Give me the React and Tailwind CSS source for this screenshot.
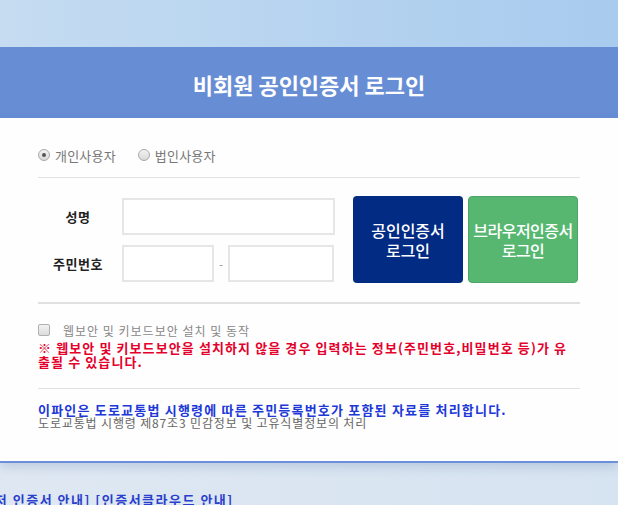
export default function App() {
  return (
    <div className="w-[618px] h-[505px] overflow-hidden flex flex-col font-['Noto_Sans_CJK_KR','Noto_Sans',sans-serif] bg-[#dae5f1]">
      <div className="h-[47px] shrink-0 bg-gradient-to-r from-[#c5dcf1] to-[#a8cbee]" />
      <div className="h-[71px] shrink-0 bg-[#678dd5] flex items-center justify-center">
        <span className="text-white font-bold text-[22px] leading-none tracking-[0px] mt-[2px]">비회원 공인인증서 로그인</span>
      </div>
      <div className="h-[345px] shrink-0 bg-[#fefefe] border-b-2 border-[#6b8fdb] shadow-[0_4px_10px_rgba(40,80,140,0.18)] px-[38px] pt-[31px] relative z-10">
        <div className="h-[12px] flex items-center text-[13px] text-[#777] leading-none tracking-[0.2px]">
          <span className="w-[12px] h-[12px] rounded-full border border-[#a9a9a9] bg-gradient-to-b from-[#f4f4f4] to-[#d8d8d8] flex items-center justify-center">
            <span className="w-[4px] h-[4px] rounded-full bg-[#555]" />
          </span>
          <span className="ml-[5px]">개인사용자</span>
          <span className="ml-[22px] w-[12px] h-[12px] rounded-full border border-[#a9a9a9] bg-gradient-to-b from-[#f4f4f4] to-[#d8d8d8]" />
          <span className="ml-[5px]">법인사용자</span>
        </div>
        <div className="mt-[16px] border-t border-[#e2e2e2]" />
        <div className="mt-[18px] flex">
          <div className="pt-[2px] flex flex-col gap-[10px]">
            <div className="flex items-center h-[37px]">
              <div className="w-[80px] text-center text-[13px] font-bold text-[#222] tracking-[0.5px]">성명</div>
              <div className="ml-[4px] w-[213px] h-[37px] border-2 border-[#e6e6e6] bg-white" />
            </div>
            <div className="flex items-center h-[37px]">
              <div className="w-[80px] text-center text-[13px] font-bold text-[#222] tracking-[0.5px]">주민번호</div>
              <div className="ml-[4px] w-[92px] h-[37px] border-2 border-[#e6e6e6] bg-white" />
              <div className="w-[14px] text-center text-[12px] text-[#999]">-</div>
              <div className="w-[106px] h-[37px] border-2 border-[#e6e6e6] bg-white" />
            </div>
          </div>
          <div className="ml-[18px] w-[110px] h-[87px] rounded-[4px] bg-[#022b84] flex items-center justify-center text-center text-white text-[16px] font-medium leading-[20px]">
            공인인증서<br />로그인
          </div>
          <div className="ml-[5px] w-[110px] h-[87px] rounded-[4px] bg-[#57b771] border border-[#4ea666] flex items-center justify-center text-center text-white text-[16px] font-medium leading-[20px] tracking-[-0.5px]">
            브라우저인증서<br />로그인
          </div>
        </div>
        <div className="mt-[19px] border-t-2 border-[#e0e0e0]" />
        <div className="mt-[20px] h-[12px] flex items-center">
          <span className="w-[12px] h-[12px] rounded-[2px] border border-[#b0b0b0] bg-gradient-to-b from-[#f2f2f2] to-[#dcdcdc]" />
          <span className="ml-[13px] text-[12px] text-[#888] leading-none mt-[1px] tracking-[1px]">웹보안 및 키보드보안 설치 및 동작</span>
        </div>
        <div className="mt-[5px] text-[13px] leading-[14px] font-bold text-[#e4002b] whitespace-nowrap tracking-[1.1px]">
          ※ 웹보안 및 키보드보안을 설치하지 않을 경우 입력하는 정보(주민번호,비밀번호 등)가 유<br />출될 수 있습니다.
        </div>
        <div className="mt-[19px] border-t border-[#e0e0e0]" />
        <div className="mt-[14px] text-[13px] leading-[13px] font-bold text-[#2038d8] whitespace-nowrap tracking-[1.2px]">
          이파인은 도로교통법 시행령에 따른 주민등록번호가 포함된 자료를 처리합니다.
        </div>
        <div className="text-[12px] leading-[13px] text-[#666] whitespace-nowrap tracking-[0.85px]">
          도로교통법 시행령 제87조3 민감정보 및 고유식별정보의 처리
        </div>
      </div>
      <div className="flex-1 bg-gradient-to-r from-[#dfe8f2] to-[#d6e3f1]">
        <div className="mt-[30px] ml-[-52px] whitespace-nowrap text-[13px] leading-[14px] font-bold text-[#2a3fcc] tracking-[1.5px]">
          [브라우저 인증서 안내] [인증서클라우드 안내]
        </div>
      </div>
    </div>
  );
}
